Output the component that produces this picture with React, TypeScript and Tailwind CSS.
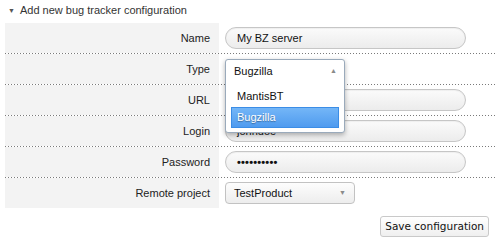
import React from "react";

const dotted =
  "h-px w-full bg-[linear-gradient(to_right,#7a7a7a_1px,transparent_1px)] bg-[length:3px_1px] bg-repeat-x";

function Row({
  label,
  children,
  last,
}: {
  label: string;
  children?: React.ReactNode;
  last?: boolean;
}) {
  return (
    <div>
      <div className="flex h-[30px]">
        <div className="w-[214px] shrink-0 bg-[#f3f3f3] pr-[9px] pt-[1px] flex items-center justify-end text-[11px] text-[#222]">
          {label}
        </div>
        <div className="flex-1 flex items-center pl-[6px]">{children}</div>
      </div>
      {!last && <div className={dotted} />}
    </div>
  );
}

function Pill({ children }: { children?: React.ReactNode }) {
  return (
    <div className="w-[241px] h-[22px] rounded-full border border-[#c6c6c6] bg-[linear-gradient(to_bottom,#fbfbfb,#ececec)] flex items-center pl-[11px] text-[11px] text-[#111] shadow-[inset_0_1px_1px_rgba(0,0,0,0.05)]">
      {children}
    </div>
  );
}

export default function App() {
  return (
    <div
      className="w-[497px] h-[242px] bg-white relative"
      style={{ fontFamily: '"Liberation Sans", Arial, sans-serif' }}
    >
      <div className="h-[23px] flex items-center pl-[8px] pb-[3px] text-[11px] text-[#333]">
        <span className="text-[7px] text-[#555] mr-[5px] leading-none">▼</span>
        Add new bug tracker configuration
      </div>
      <div className="ml-[5px] w-[490px]">
        <Row label="Name">
          <Pill>My BZ server</Pill>
        </Row>
        <Row label="Type">
          <div className="w-[120px] h-[22px]" />
        </Row>
        <Row label="URL">
          <Pill />
        </Row>
        <Row label="Login">
          <Pill>johndoe</Pill>
        </Row>
        <Row label="Password">
          <Pill>
            <span className="text-[11px] font-bold tracking-[0.2px]">••••••••••</span>
          </Pill>
        </Row>
        <Row label="Remote project" last>
          <div className="w-[130px] h-[22px] rounded-[4px] border border-[#c2c2c2] bg-[linear-gradient(to_bottom,#fdfdfd,#ededed)] flex items-center justify-between pl-[8px] pr-[8px] text-[11px] text-[#111]">
            <span>TestProduct</span>
            <span className="text-[7px] text-[#8a8a8a]">▼</span>
          </div>
        </Row>
      </div>
      <div className="flex justify-end pr-[8px] pt-[8px]">
        <button
          className="h-[21px] px-[4px] rounded-[3px] border border-[#c9c9c9] bg-[linear-gradient(to_bottom,#ffffff,#efefef)] text-[10.5px] text-[#111]"
          style={{ fontFamily: '"DejaVu Sans", sans-serif' }}
        >
          Save configuration
        </button>
      </div>

      {/* open select popup */}
      <div className="absolute left-[225px] top-[59px] w-[120px] h-[74px] rounded-[3px] border border-[#9aaabb] bg-white shadow-[0_2px_5px_rgba(0,0,0,0.3)] text-[11px]">
        <div className="h-[23px] flex items-center justify-between pl-[8px] pr-[7px] text-[#111]">
          <span>Bugzilla</span>
          <span className="text-[7px] text-[#8a8a8a]">▲</span>
        </div>
        <div className="h-[22px] flex items-center pl-[11px] pt-[5px] text-[#111]">
          MantisBT
        </div>
        <div className="mx-[5px] mt-[2px] h-[21px] flex items-center pl-[5px] border border-[#3b8de6] bg-[linear-gradient(to_bottom,#74b6f7,#4f9bef)] text-white [text-shadow:0_1px_1px_rgba(0,0,0,0.35)]">
          Bugzilla
        </div>
      </div>
    </div>
  );
}
